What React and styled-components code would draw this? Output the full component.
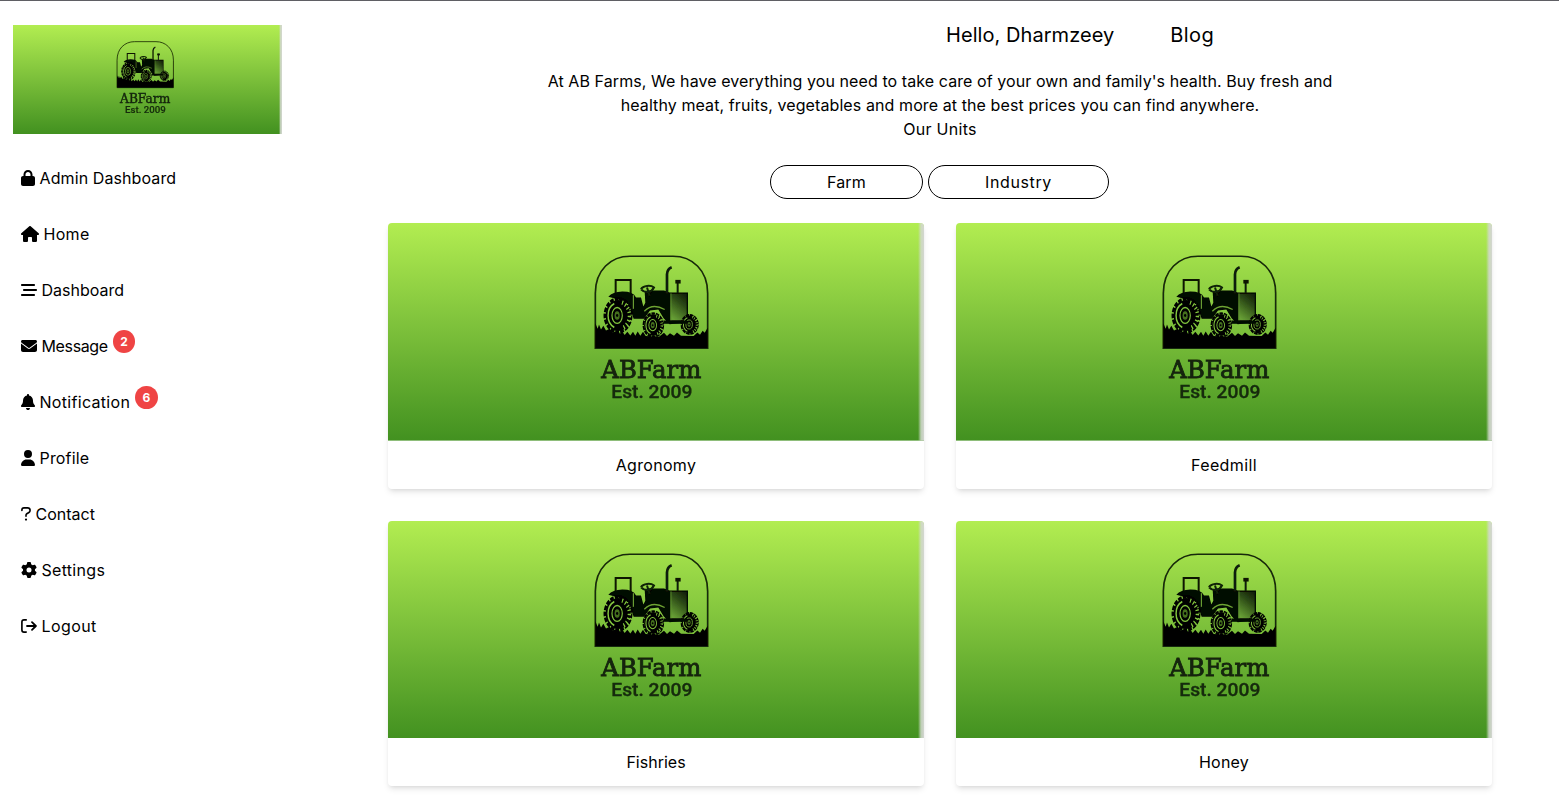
import React from "react";
import styled, { createGlobalStyle } from "styled-components";
import {
  FaLock, FaHouse, FaBarsStaggered, FaEnvelope, FaBell,
  FaUser, FaGear,
} from "react-icons/fa6";

const GlobalStyle = createGlobalStyle`
  *, *::before, *::after { box-sizing: border-box; }
  body { margin: 0; background: #fff; color: #000; overflow: hidden;
    font-family: Inter, "Noto Sans", sans-serif; font-size: 16px; line-height: 24px; }
`;

const Page = styled.div`
  display: flex;
  height: 812px;
  overflow: hidden;
  border-top: 1px solid #5f5f64;
`;
const Sidebar = styled.aside`
  width: 321px;
  flex: none;
  padding: 24px 0 0 13px;
`;
const SideLogo = styled.div`
  width: 269px;
  height: 109px;
`;
const Nav = styled.nav`
  display: flex;
  flex-direction: column;
  gap: 32px;
  padding: 32px 0 0 8px;
`;
const NavItem = styled.a`
  display: flex;
  align-items: center;
  height: 24px;
  white-space: pre;
`;
const NavIcon = styled.span`
  display: flex;
  justify-content: center;
  flex: none;
  width: ${(p) => p.$width}px;
  margin-right: 4.5px;
  svg { height: 16px; width: ${(p) => p.$width}px; flex: none; }
`;
const Label = styled.span`
  letter-spacing: ${(p) => p.$track || 0}px;
`;
const Badge = styled.span`
  display: flex;
  align-items: center;
  justify-content: center;
  width: 22.5px;
  height: 23px;
  margin: -9px 0 0 5px;
  border-radius: 50%;
  background: #ef4444;
  color: #fff;
  font-size: 12px;
  font-weight: 700;
`;
const Main = styled.main`
  flex: 1;
  display: flex;
  flex-direction: column;
  align-items: center;
`;
const TopBar = styled.header`
  display: flex;
  align-items: center;
  gap: 56px;
  align-self: flex-start;
  margin-left: 625px;
  padding-top: 20px;
  font-size: 20px;
  line-height: 28px;
  white-space: nowrap;
`;
const Intro = styled.section`
  display: flex;
  flex-direction: column;
  align-items: center;
  padding-top: 20px;
  white-space: nowrap;
`;
const Line = styled.span`
  letter-spacing: ${(p) => p.$track || 0}px;
`;
const Tabs = styled.div`
  display: flex;
  gap: 5px;
  padding: 24px 0;
  margin-right: 1px;
`;
const Tab = styled.button`
  width: ${(p) => p.$width}px;
  height: 34px;
  padding: 0;
  border: 1px solid #000;
  border-radius: 17px;
  background: transparent;
  color: #000;
  font: inherit;
  letter-spacing: ${(p) => p.$track || 0}px;
`;
const Grid = styled.div`
  display: grid;
  grid-template-columns: 536px 536px;
  gap: 32px;
`;
const Card = styled.article`
  border-radius: 4px;
  overflow: hidden;
  background: #fff;
  box-shadow: 0 4px 6px -1px rgba(0, 0, 0, 0.1), 0 2px 4px -2px rgba(0, 0, 0, 0.1);
`;
const CardArt = styled.div`
  height: 217.6px;
`;
const CardTitle = styled.div`
  height: 48px;
  line-height: 48px;
  text-align: center;
  letter-spacing: ${(p) => p.$track || 0}px;
`;
const Art = styled.svg`
  display: block;
  width: 100%;
  height: 100%;
`;

function QuestionIcon() {
  return (
    <svg viewBox="0 0 10 16" fill="none" stroke="currentColor" strokeWidth="1.6" strokeLinecap="round" strokeLinejoin="round">
      <path d="M0.9 4.5 V4 Q0.9 1.9 3 1.9 H6.6 Q9.1 1.9 9.1 4.3 Q9.1 5.7 7.9 6.5 L5.8 7.8 Q5 8.3 5 9.2 V10.3" />
      <circle cx="5" cy="13.6" r="1.1" fill="currentColor" stroke="none" />
    </svg>
  );
}

function LogoutIcon() {
  return (
    <svg viewBox="0 0 16 16" fill="none" stroke="currentColor" strokeWidth="1.65" strokeLinecap="round" strokeLinejoin="round">
      <path d="M5.2 1.9 H3 Q0.9 1.9 0.9 4 V12 Q0.9 14.1 3 14.1 H5.2" />
      <path d="M6 8 H14.6 M11 4.2 L14.9 8 L11 11.8" strokeWidth="1.8" />
    </svg>
  );
}

function Wheel({ x, y, rx, ry, lugs }) {
  return (
    <g transform={`translate(${x} ${y}) scale(${rx / 50} ${ry / 50})`}>
      <circle r="43" fill="#000" />
      <circle r="46" fill="none" stroke="#000" strokeWidth="9" strokeDasharray={`${289 / lugs - 4} 4`} />
      <path d="M-13 -33 A36 36 0 0 0 -13 33" fill="none" stroke="#85c83f" strokeWidth="5" />
      <path d="M14 -36 A38 38 0 0 1 14 36" fill="none" stroke="#85c83f" strokeWidth="12" strokeDasharray="4 8" />
      <ellipse cx="-3" rx="18" ry="22" fill="none" stroke="#82c43d" strokeWidth="4" />
      <ellipse cx="-3" rx="9" ry="12" fill="#44701f" />
      <circle cx="-3" r="4" fill="#000" />
    </g>
  );
}

function FarmArt({ id }) {
  return (
    <Art viewBox="0 0 536 218" preserveAspectRatio="none">
      <defs>
        <linearGradient id={`${id}-field`} x1="0" y1="0" x2="0" y2="1">
          <stop offset="0" stopColor="#b2ed51" />
          <stop offset="0.5" stopColor="#7bbf3a" />
          <stop offset="1" stopColor="#429120" />
        </linearGradient>
        <linearGradient id={`${id}-edge`} x1="0" x2="1" y1="0" y2="0">
          <stop offset="0" stopColor="#d3d8cf" stopOpacity="0" />
          <stop offset="0.5" stopColor="#d3d8cf" stopOpacity="0.85" />
          <stop offset="1" stopColor="#d3d6d1" />
        </linearGradient>
        <linearGradient id={`${id}-grille`} x1="0.8" y1="0" x2="0.3" y2="1">
          <stop offset="0" stopColor="#16240a" />
          <stop offset="0.35" stopColor="#2c4a16" />
          <stop offset="1" stopColor="#679f35" />
        </linearGradient>
        <filter id={`${id}-soft`} x="-5%" y="-5%" width="110%" height="110%">
          <feGaussianBlur stdDeviation="1.5" />
        </filter>
      </defs>
      <rect width="536" height="218" fill={`url(#${id}-field)`} />
      <rect x="530" width="6" height="218" fill={`url(#${id}-edge)`} />
      <g transform="translate(197 22) scale(0.33333)" filter={`url(#${id}-soft)`}>
        <path d="M31 310 V145 C31 75 78 34 135 34 H264 C321 34 368 75 368 145 V310 Z" fill="none" stroke="#182908" strokeWidth="5" />
        <path d="M92 151 V105 H137 V160" fill="none" stroke="#0b1404" strokeWidth="6" />
        <path d="M70 156 Q83 141 112 140 Q145 140 153 158 H168 L175 185 L181 174 L179 139 L190 137 H237 L254 143 H309 V232 L254 238 L236 220 L220 194 L195 197 L177 222 H146 L132 180 L99 163 Z" fill="#040701" />
        <path d="M145 151 V192" stroke="#7dbd3b" strokeWidth="3" fill="none" />
        <path d="M168 133 C174 121 198 120 207 128 C199 143 181 147 168 133 M186 128 L194 153" fill="none" stroke="#102007" strokeWidth="6" />
        <path d="M246 145 V88 Q247 72 260 67" fill="none" stroke="#101b08" strokeWidth="8" />
        <path d="M278 145 V107" stroke="#101b08" strokeWidth="6" />
        <path d="M271 105 H287 V116 H271 Z" fill="#0b1404" />
        <rect x="256" y="147" width="49" height="80" fill={`url(#${id}-grille)`} />
        <path d="M258 145 V228" stroke="#5d912e" strokeWidth="2.5" />
        <path d="M178 199 Q203 174 239 194" fill="none" stroke="#6ca632" strokeWidth="4" />
        <path d="M31 310 V235 L38 252 L42 239 L48 254 L55 243 L63 257 L74 252 L84 263 L99 257 L105 267 L112 260 L119 271 L127 261 L136 272 L144 261 L151 273 L158 260 L166 273 L174 261 L182 274 L222 276 L237 264 L246 274 L255 265 L267 273 L276 263 L288 273 L326 274 L337 263 L345 270 L353 258 L359 264 L368 249 V310 Z" fill="#030501" />
        <Wheel x={99} y={212} rx={43} ry={54} lugs={17} />
        <Wheel x={205} y={241} rx={32} ry={38} lugs={14} />
        <Wheel x={314} y={239} rx={27} ry={31} lugs={12} />
        <path d="M237 232 H306" stroke="#050902" strokeWidth="10" />
        <text x="49" y="400" textLength="300" lengthAdjust="spacingAndGlyphs" fontFamily="'DejaVu Serif', serif" fontSize="73" fill="#14250a" stroke="#14250a" strokeWidth="2.5">ABFarm</text>
        <text x="79" y="461" textLength="243" lengthAdjust="spacingAndGlyphs" fontFamily="Roboto, sans-serif" fontSize="56" fontWeight="500" fill="#152b0b" stroke="#152b0b" strokeWidth="1">Est. 2009</text>
      </g>
    </Art>
  );
}

const links = [
  { name: "Admin Dashboard", Icon: FaLock, width: 14, track: 0.1 },
  { name: "Home", Icon: FaHouse, width: 18, track: 0.3 },
  { name: "Dashboard", Icon: FaBarsStaggered, width: 16, track: 0 },
  { name: "Message", Icon: FaEnvelope, width: 16, count: 2, track: -0.36 },
  { name: "Notification", Icon: FaBell, width: 14, count: 6, track: 0.31 },
  { name: "Profile", Icon: FaUser, width: 14, track: 0.18 },
  { name: "Contact", Icon: QuestionIcon, width: 10, track: 0 },
  { name: "Settings", Icon: FaGear, width: 16, track: 0.3 },
  { name: "Logout", Icon: LogoutIcon, width: 16, track: 0.42 },
];
const units = [
  { name: "Agronomy", track: 0.3 },
  { name: "Feedmill", track: 0.4 },
  { name: "Fishries", track: 0 },
  { name: "Honey", track: 0.2 },
];

export default function App() {
  return (
    <Page>
      <GlobalStyle />
      <Sidebar>
        <SideLogo><FarmArt id="brand" /></SideLogo>
        <Nav>
          {links.map(({ name, Icon, width, count, track }) => (
            <NavItem key={name}>
              <NavIcon $width={width}><Icon /></NavIcon>
              <Label $track={track}>{name}</Label>
              {count && <Badge>{count}</Badge>}
            </NavItem>
          ))}
        </Nav>
      </Sidebar>
      <Main>
        <TopBar>
          <Label $track={0.06}>Hello, Dharmzeey</Label>
          <Label $track={0.4}>Blog</Label>
        </TopBar>
        <Intro>
          <Line $track={0.083}>At AB Farms, We have everything you need to take care of your own and family's health. Buy fresh and</Line>
          <Line $track={0.095}>healthy meat, fruits, vegetables and more at the best prices you can find anywhere.</Line>
          <Line $track={0.3}>Our Units</Line>
        </Intro>
        <Tabs>
          <Tab $width={153} $track={0.2}>Farm</Tab>
          <Tab $width={181} $track={0.6}>Industry</Tab>
        </Tabs>
        <Grid>
          {units.map(({ name, track }) => (
            <Card key={name}>
              <CardArt><FarmArt id={name} /></CardArt>
              <CardTitle $track={track}>{name}</CardTitle>
            </Card>
          ))}
        </Grid>
      </Main>
    </Page>
  );
}
